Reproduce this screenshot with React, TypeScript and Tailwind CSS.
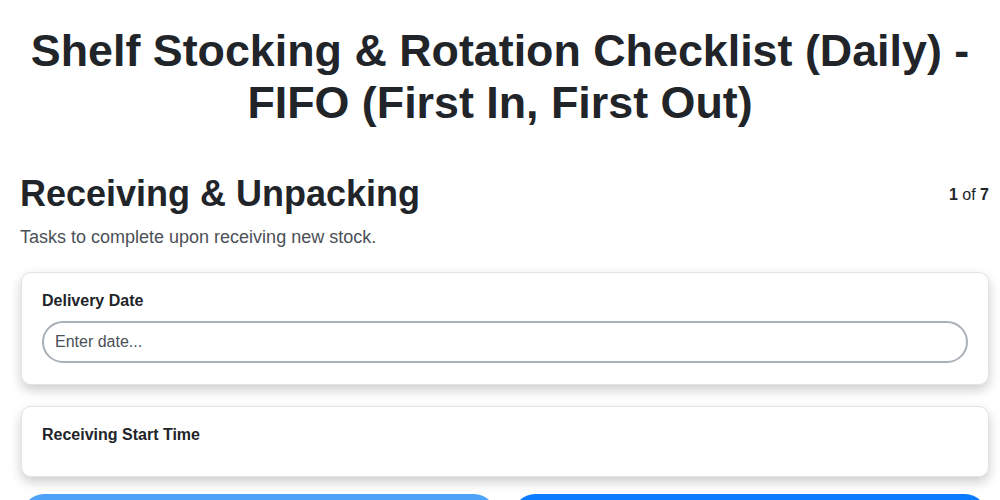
export default function App() {
  return (
    <div className="min-h-screen bg-white pt-6 text-[#212529] font-['Liberation_Sans',Arial,sans-serif]">
      <h1 className="px-5 text-center text-[44.8px] font-bold leading-[52px]">
        Shelf Stocking &amp; Rotation Checklist (Daily) - FIFO (First In, First Out)
      </h1>

      <div className="pl-[21px] pr-[11px]">
        <div className="mt-[44px] flex items-start justify-between">
          <h2 className="-ml-px text-[36px] font-bold leading-[44px]">Receiving &amp; Unpacking</h2>
          <div className="pt-[13px] pr-[-1px] text-[16px] leading-[20px]">
            <span className="font-bold">1</span> of <span className="font-bold">7</span>
          </div>
        </div>
        <p className="-ml-px mt-[8px] text-[18px] leading-[27px] text-[#4b5057]">
          Tasks to complete upon receiving new stock.
        </p>

        <div className="mt-[21px] flex flex-col gap-[21px]">
          <div className="rounded-[10px] border border-[#e3e4e8] bg-white px-5 pb-[21px] pt-[18px] shadow-[0_5px_12px_rgba(0,0,0,0.2)]">
            <label className="block text-[16px] font-bold leading-[20px]">Delivery Date</label>
            <input
              placeholder="Enter date..."
              className="mt-[10px] h-[42px] w-full rounded-full border-2 border-[#a9b0b8] px-[11px] text-[16px] text-[#212529] placeholder:text-[#495057] outline-none"
            />
          </div>
          <div className="h-[71px] rounded-[10px] border border-[#e3e4e8] bg-white px-5 pt-[18px] shadow-[0_5px_12px_rgba(0,0,0,0.2)]">
            <label className="block text-[16px] font-bold leading-[20px]">Receiving Start Time</label>
          </div>
        </div>

        <div className="mt-[17px] flex gap-[17px] pl-px pr-[2px]">
          <button className="h-[44px] flex-1 rounded-full bg-[#4da3f7] text-white">Previous</button>
          <button className="h-[44px] flex-1 rounded-full bg-[#0a7cff] text-white">Next</button>
        </div>
      </div>
    </div>
  );
}
